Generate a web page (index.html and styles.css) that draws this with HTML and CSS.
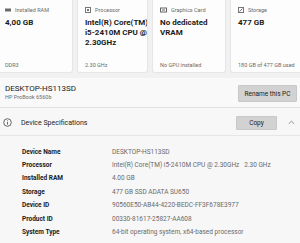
FILE: index.html
```html
<!DOCTYPE html>
<html>
<head>
    <meta charset="UTF-8">
    <title>About</title>
    <link rel="stylesheet" href="styles.css">
</head>
<body>
<!-- 顶部四张卡片 -->
<div class="cards">
    <div class="card">
        <div class="cardHead">
            <svg width="6" height="6" viewBox="0 0 6 6"><rect x="0" y="1.5" width="6" height="3" fill="#6b6b6b"/></svg>
            <span>Installed RAM</span>
        </div>
        <div class="cardValue">4,00 GB</div>
        <div class="cardFoot">DDR3</div>
    </div>
    <div class="card">
        <div class="cardHead">
            <svg width="6" height="6" viewBox="0 0 6 6"><rect x="0.5" y="0.5" width="5" height="5" fill="none" stroke="#777" stroke-width="1"/><rect x="2" y="2" width="2" height="2" fill="#777"/></svg>
            <span>Processor</span>
        </div>
        <div class="cardValue">Intel(R) Core(TM)<br>i5-2410M CPU @<br>2.30GHz</div>
        <div class="cardFoot">2.30 GHz</div>
    </div>
    <div class="card">
        <div class="cardHead">
            <svg width="7" height="6" viewBox="0 0 7 6"><rect x="0.5" y="1" width="6" height="4" fill="none" stroke="#666" stroke-width="1"/><rect x="2" y="2.5" width="3" height="1" fill="#666"/></svg>
            <span>Graphics Card</span>
        </div>
        <div class="cardValue">No dedicated<br>VRAM</div>
        <div class="cardFoot">No GPU installed</div>
    </div>
    <div class="card">
        <div class="cardHead">
            <svg width="6" height="6" viewBox="0 0 6 6"><rect x="0.5" y="0.5" width="5" height="5" fill="none" stroke="#777" stroke-width="1"/><path d="M1.5 4.5 L4.5 1.5" stroke="#777" stroke-width="1"/></svg>
            <span>Storage</span>
        </div>
        <div class="cardValue">477 GB</div>
        <div class="cardFoot">180 GB of 477 GB used</div>
    </div>
</div>

<!-- 电脑名称 -->
<div class="pcPanel">
    <div class="pcText">
        <div class="pcName">DESKTOP-HS113SD</div>
        <div class="pcModel">HP ProBook 6560b</div>
    </div>
    <button class="grayButton renameButton">Rename this PC</button>
</div>

<!-- 设备规格 -->
<div class="specPanel">
    <div class="specHead">
        <svg class="infoIcon" width="9" height="9" viewBox="0 0 9 9">
            <circle cx="4.5" cy="4.5" r="3.8" fill="none" stroke="#444" stroke-width="0.8"/>
            <rect x="4.1" y="4" width="0.8" height="2.6" fill="#444"/>
            <rect x="4.1" y="2.4" width="0.8" height="0.8" fill="#444"/>
        </svg>
        <span class="specTitle">Device Specifications</span>
        <button class="grayButton copyButton">Copy</button>
        <svg class="chevron" width="7" height="5" viewBox="0 0 7 5"><path d="M0.8 3.8 L3.5 1.2 L6.2 3.8" fill="none" stroke="#777" stroke-width="0.8"/></svg>
    </div>
    <table class="specTable">
        <tr><td class="specLabel">Device Name</td><td class="specValue">DESKTOP-HS113SD</td></tr>
        <tr><td class="specLabel">Processor</td><td class="specValue">Intel(R) Core(TM) i5-2410M CPU @ 2.30GHz&nbsp;&nbsp;&nbsp;2.30 GHz</td></tr>
        <tr><td class="specLabel">Installed RAM</td><td class="specValue">4.00 GB</td></tr>
        <tr><td class="specLabel">Storage</td><td class="specValue">477 GB SSD ADATA SU650</td></tr>
        <tr><td class="specLabel">Device ID</td><td class="specValue">90560E50-AB44-4220-BEDC-FF3F678E3977</td></tr>
        <tr><td class="specLabel">Product ID</td><td class="specValue">00330-81617-25827-AA608</td></tr>
        <tr><td class="specLabel">System Type</td><td class="specValue">64-bit operating system, x64-based processor</td></tr>
    </table>
</div>
</body>
</html>
```

FILE: styles.css
```css
body {
    margin: 0;
    background: #f1f1f1;
    font-family: Roboto, "Open Sans", sans-serif;
    color: #1b1b1b;
    overflow: hidden;
}

/*卡片，两侧被截掉一点*/
.cards {
    display: grid;
    grid-template-columns: 76px 71px 74px 72px;
    column-gap: 4px;
    margin-left: -3px;
}

.card {
    height: 73px;
    box-sizing: border-box;
    background: #fdfdfd;
    border: 1px solid #e6e6e6;
    border-top: none;
    border-radius: 0 0 3px 3px;
    padding: 6px 2px 3px 7px;
    display: flex;
    flex-direction: column;
    overflow: hidden;
}

.cardHead {
    display: flex;
    align-items: center;
    gap: 4px;
    font-size: 5.5px;
    color: #6a6a6a;
    height: 8px;
}

.cardValue {
    margin-top: 4px;
    font-size: 8px;
    font-weight: 700;
    line-height: 10px;
    white-space: nowrap;
}

.cardFoot {
    margin-top: auto;
    font-size: 5.5px;
    color: #6a6a6a;
    line-height: 8px;
    white-space: nowrap;
}

/*电脑名称*/
.pcPanel {
    margin-top: 5px;
    height: 30px;
    box-sizing: border-box;
    background: #f9f9f9;
    border-bottom: 1px solid #e2e2e2;
    display: flex;
    align-items: center;
    padding: 0 3px 0 5px;
}

.pcText {
    flex: 1;
}

.pcName {
    font-size: 8px;
    line-height: 9px;
}

.pcModel {
    font-size: 5.5px;
    line-height: 8px;
    color: #6a6a6a;
}

.grayButton {
    background: #d2d2d2;
    border: 1px solid #c8c8c8;
    border-radius: 1px;
    font-family: Roboto, "Open Sans", sans-serif;
    color: #1b1b1b;
    padding: 0;
}

.renameButton {
    width: 59px;
    height: 17px;
    font-size: 6.5px;
    margin-top: 2px;
}

/*设备规格*/
.specPanel {
    background: #f7f7f7;
    height: 135px;
}

.specHead {
    height: 28px;
    box-sizing: border-box;
    display: flex;
    align-items: center;
    padding: 2px 5px 0 3px;
    border-bottom: 1px solid #e6e6e6;
}

.specTitle {
    flex: 1;
    margin-left: 9px;
    font-size: 7px;
}

.copyButton {
    width: 41px;
    height: 14px;
    font-size: 6.5px;
}

.chevron {
    margin-left: 11px;
}

.specTable {
    margin-left: 22px;
    margin-top: 9px;
    border-collapse: collapse;
}

.specTable td {
    height: 13.4px;
    padding: 0;
    font-size: 6.5px;
    white-space: nowrap;
}

.specLabel {
    width: 90px;
    font-weight: 700;
}

.specValue {
    color: #6a6a6a;
}
```
